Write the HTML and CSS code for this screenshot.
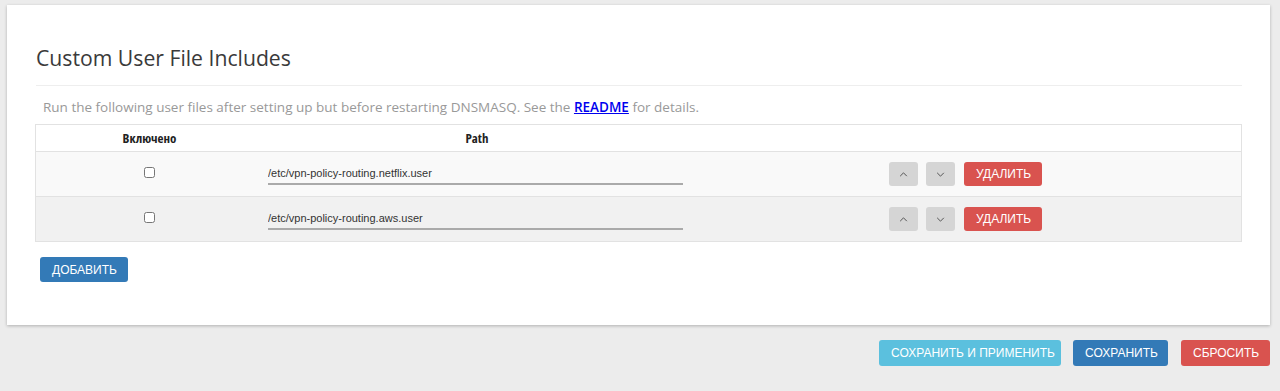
FILE: index.html
```html
<!DOCTYPE html>
<html lang="ru">
<head>
    <meta charset="UTF-8">
    <meta name="viewport" content="width=device-width, initial-scale=1.0">
    <title>Custom User File Includes</title>
    <link rel="stylesheet" href="styles.css">
</head>
<body>
    <div class="card">
        <h2 class="card-title">Custom User File Includes</h2>
        <p class="card-desc">Run the following user files after setting up but before restarting DNSMASQ. See the <a href="#">README</a> for details.</p>

        <table class="files">
            <thead>
                <tr>
                    <th class="col-enabled">Включено</th>
                    <th class="col-path">Path</th>
                    <th class="col-actions"></th>
                </tr>
            </thead>
            <tbody>
                <tr class="odd">
                    <td class="col-enabled"><input type="checkbox"></td>
                    <td class="col-path"><input class="path-input" type="text" value="/etc/vpn-policy-routing.netflix.user"></td>
                    <td class="col-actions">
                        <div class="actions">
                            <button class="btn btn-move"><svg viewBox="0 0 10 6" width="9" height="5"><path d="M1 5 L5 1 L9 5" /></svg></button>
                            <button class="btn btn-move"><svg viewBox="0 0 10 6" width="9" height="5"><path d="M1 1 L5 5 L9 1" /></svg></button>
                            <button class="btn btn-danger">УДАЛИТЬ</button>
                        </div>
                    </td>
                </tr>
                <tr class="even">
                    <td class="col-enabled"><input type="checkbox"></td>
                    <td class="col-path"><input class="path-input" type="text" value="/etc/vpn-policy-routing.aws.user"></td>
                    <td class="col-actions">
                        <div class="actions">
                            <button class="btn btn-move"><svg viewBox="0 0 10 6" width="9" height="5"><path d="M1 5 L5 1 L9 5" /></svg></button>
                            <button class="btn btn-move"><svg viewBox="0 0 10 6" width="9" height="5"><path d="M1 1 L5 5 L9 1" /></svg></button>
                            <button class="btn btn-danger">УДАЛИТЬ</button>
                        </div>
                    </td>
                </tr>
            </tbody>
        </table>

        <button class="btn btn-primary btn-add">ДОБАВИТЬ</button>
    </div>

    <div class="page-actions">
        <button class="btn btn-info">СОХРАНИТЬ И ПРИМЕНИТЬ</button>
        <button class="btn btn-primary">СОХРАНИТЬ</button>
        <button class="btn btn-danger">СБРОСИТЬ</button>
    </div>
</body>
</html>
```

FILE: styles.css
```css
body {
    margin: 0;
    padding: 5px 10px 0 7px;
    background-color: #ececec;
    font-family: "Open Sans", sans-serif;
    color: #404040;
}

.card {
    background: #fff;
    box-shadow: 0 1px 3px rgba(0, 0, 0, 0.25);
    padding: 40px 28px 43px 28px;
}

.card-title {
    margin: 0 0 0 1px;
    padding-bottom: 14px;
    border-bottom: 1px solid #eee;
    font-size: 21.2px;
    font-weight: 400;
    line-height: 26px;
    color: #3a3a3a;
}

.card-desc {
    margin: 12px 0 8px 8px;
    font-size: 13.5px;
    line-height: 18px;
    color: #999;
}

.card-desc a {
    color: #0000ee;
    font-weight: 600;
}

.files {
    width: 100%;
    border-collapse: collapse;
    border: 1px solid #e2e2e2;
}

.files th {
    height: 26px;
    font-size: 13px;
    font-weight: 700;
    font-stretch: condensed;
    color: #222;
    border-bottom: 1px solid #e2e2e2;
    padding: 0;
}

.files td {
    height: 44px;
    padding: 0;
    text-align: center;
    border-bottom: 1px solid #e2e2e2;
}

.files tr.odd td {
    background: #f9f9f9;
}

.files tr.even td {
    background: #f1f1f1;
}

.col-enabled {
    width: 227px;
}

.col-path {
    width: 428px;
}

.files input[type="checkbox"] {
    margin: 0;
    width: 11px;
    height: 11px;
    position: relative;
    top: -2px;
}

.path-input {
    display: block;
    box-sizing: border-box;
    width: 415px;
    margin: 3px 0 0 5px;
    padding: 1px 0 4px 0;
    border: none;
    border-bottom: 2px solid #aaa;
    background: transparent;
    font-family: "Liberation Sans", Arial, sans-serif;
    font-size: 11px;
    color: #333;
    outline: none;
}

.actions {
    display: flex;
    justify-content: center;
    gap: 9px;
    padding-right: 1px;
}

.btn {
    border: none;
    border-radius: 3px;
    font-family: "Liberation Sans", Arial, sans-serif;
    font-size: 12px;
    color: #fff;
    cursor: pointer;
    padding: 0 12px;
    height: 24px;
    white-space: nowrap;
}

.btn-move {
    width: 29px;
    padding: 0;
    background: #d5d5d5;
    margin-right: -1px;
    display: flex;
    align-items: center;
    justify-content: center;
}

.btn-move svg {
    fill: none;
    stroke: #555;
    stroke-width: 1.2;
}

.btn-danger {
    background: #d9534f;
    width: 78px;
    margin-left: 1px;
}

.btn-primary {
    background: #337ab7;
}

.btn-info {
    background: #5bc0de;
}

.btn-add {
    margin: 15px 0 0 5px;
    height: 25px;
    width: 88px;
}

.page-actions {
    display: flex;
    justify-content: flex-end;
    gap: 12px;
    margin-top: 15px;
}

.page-actions .btn {
    height: 26px;
    font-size: 12px;
}

.page-actions .btn-info {
    width: 182px;
}

.page-actions .btn-primary {
    width: 95px;
}

.page-actions .btn-danger {
    width: 89px;
}
```
